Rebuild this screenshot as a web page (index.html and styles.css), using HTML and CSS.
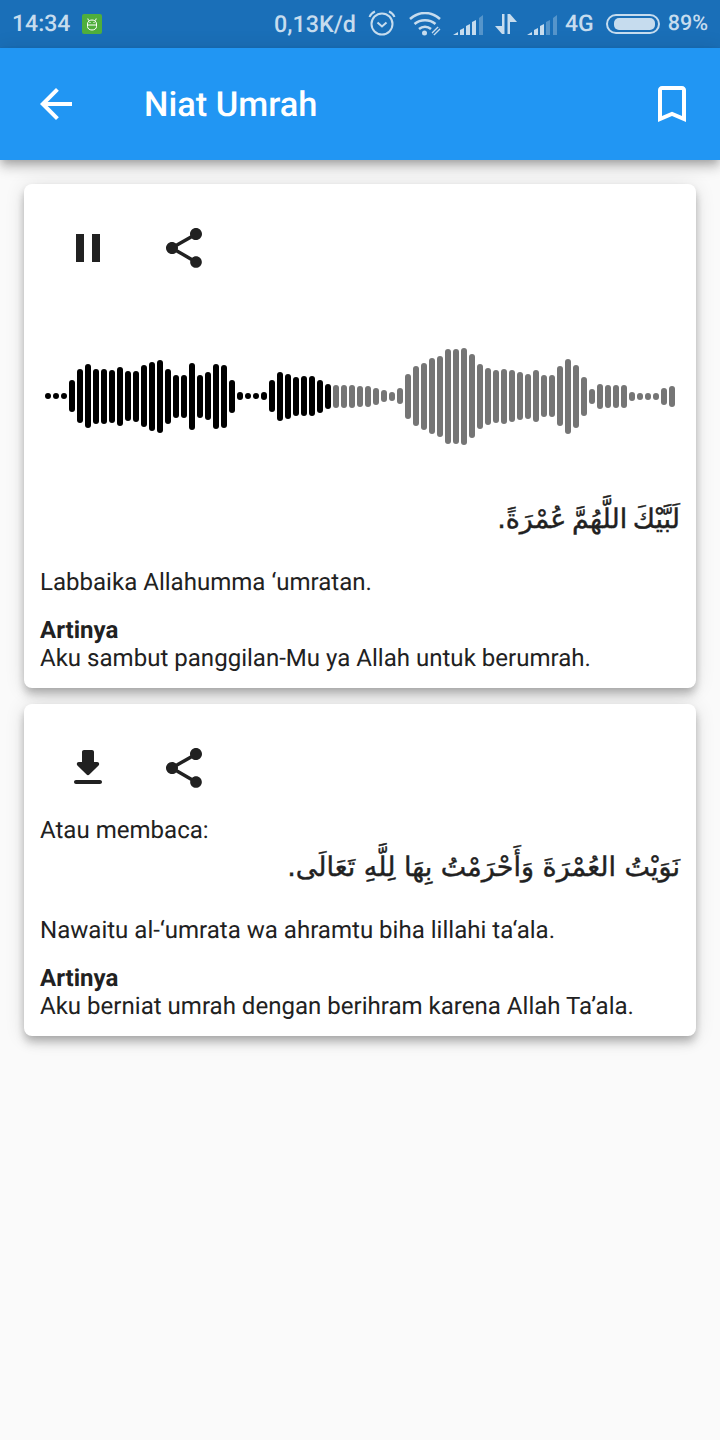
FILE: index.html
```html
<!DOCTYPE html>
<html lang="en">
<head>
    <meta charset="UTF-8">
    <meta name="viewport" content="width=device-width, initial-scale=1.0">
    <title>Niat Umrah</title>
    <link rel="stylesheet" href="styles.css">
</head>
<body>
    <div class="status-bar">
        <span class="status-time">14:34</span>
        <svg class="status-badge" width="20" height="20" viewBox="0 0 20 20">
            <rect width="20" height="20" rx="2" fill="#4fae3c"/>
            <path d="M6.500 6.500L5.800 4.500M13.500 6.500l.7-2M5.500 10c0-2.500 2-4 4.500-4s4.500 1.500 4.500 4v2.500c0 2.200-2 3.500-4.500 3.500s-4.500-1.300-4.500-3.500zM5.500 11h9" fill="none" stroke="#fff" stroke-width="1"/>
            <path d="M7.500 8h1v1h-1zM11.500 8h1v1h-1z" fill="#fff"/>
        </svg>
        <span class="status-speed">0,13K/d</span>
        <svg class="status-alarm" width="28" height="28" viewBox="0 0 28 28" fill="none" stroke="#c6dcee">
            <circle cx="14" cy="15" r="10.500" stroke-width="2"/>
            <path d="M9.500 13.500l4.500 4 4.500-4" stroke-width="2"/>
            <path d="M1.500 8c1-2.500 3-4.500 5.500-5.500M26.500 8c-1-2.500-3-4.500-5.500-5.500" stroke-width="2"/>
        </svg>
        <svg class="status-wifi" width="34" height="24" viewBox="0 0 34 24" fill="none" stroke="#c6dcee" stroke-width="2.500">
            <path d="M1 7c9-8 21-8 30 0M5.500 12c6-5 15-5 21 0M10 17c3.500-3 8.500-3 12 0"/>
            <circle cx="15.500" cy="21" r="2.500" fill="#c6dcee" stroke="none"/>
            <path d="M24 22l6-6" stroke-width="4"/>
            <path d="M24 22l6-6" stroke="#1a6fb8" stroke-width="1.500"/>
        </svg>
        <svg class="status-signal" width="30" height="20" viewBox="0 0 30 20" fill="#c6dcee">
            <path d="M0 20l5-3v3zM7 20v-5l4-2v7zM13 20v-9l4-2v11zM19 20V7l4-2v15z"/>
            <path d="M26 20V3l4-3v20z" opacity=".35"/>
        </svg>
        <svg class="status-arrows" width="22" height="20" viewBox="0 0 22 20" fill="#c6dcee">
            <path d="M7 0h2.500v20H7l-7-8h7zM12.500 0H15l7 8h-7v12h-2.500z"/>
        </svg>
        <svg class="status-signal second" width="30" height="20" viewBox="0 0 30 20" fill="#c6dcee">
            <path d="M0 20l5-3v3zM7 20v-5l4-2v7zM13 20v-9l4-2v11z"/>
            <path d="M19 20V7l4-2v15zM26 20V3l4-3v20z" opacity=".35"/>
        </svg>
        <span class="status-net">4G</span>
        <span class="battery"><span class="battery-fill"></span></span>
        <span class="status-percent">89%</span>
    </div>

    <header class="app-bar">
        <svg class="icon" width="48" height="48" viewBox="0 0 24 24">
            <path d="M20 11H7.830l5.590-5.590L12 4l-8 8 8 8 1.410-1.410L7.830 13H20v-2z"/>
        </svg>
        <h1 class="app-title">Niat Umrah</h1>
        <svg class="icon" width="48" height="48" viewBox="0 0 24 24">
            <path d="M17 3H7c-1.100 0-2 .9-2 2v16l7-3 7 3V5c0-1.100-.9-2-2-2zm0 15l-5-2.180L7 18V5h10v13z"/>
        </svg>
    </header>

    <main class="content">
        <section class="card">
            <div class="actions">
                <button class="icon-btn" type="button">
                    <svg class="icon" width="48" height="48" viewBox="0 0 24 24"><path d="M6 19h4V5H6v14zm8-14v14h4V5h-4z"/></svg>
                </button>
                <button class="icon-btn" type="button">
                    <svg class="icon" width="48" height="48" viewBox="0 0 24 24"><path d="M18 16.080c-.76 0-1.440.3-1.960.77L8.910 12.700c.05-.23.09-.46.09-.7s-.04-.47-.09-.7l7.050-4.110c.54.5 1.250.81 2.040.81 1.660 0 3-1.340 3-3s-1.340-3-3-3-3 1.340-3 3c0 .24.04.47.09.7L8.040 9.810C7.500 9.310 6.790 9 6 9c-1.660 0-3 1.340-3 3s1.340 3 3 3c.79 0 1.500-.31 2.040-.81l7.120 4.160c-.05.21-.08.43-.08.65 0 1.610 1.310 2.920 2.920 2.920 1.610 0 2.920-1.310 2.920-2.920s-1.310-2.920-2.920-2.920z"/></svg>
                </button>
            </div>
            <div class="wave">
                <i style="height:6px"></i><i style="height:6px"></i><i style="height:6px"></i><i style="height:32px"></i><i style="height:54px"></i><i style="height:64px"></i><i style="height:55px"></i><i style="height:55px"></i><i style="height:53px"></i><i style="height:59px"></i><i style="height:50px"></i><i style="height:51px"></i><i style="height:62px"></i><i style="height:69px"></i><i style="height:73px"></i><i style="height:55px"></i><i style="height:43px"></i><i style="height:43px"></i><i style="height:67px"></i><i style="height:43px"></i><i style="height:48px"></i><i style="height:65px"></i><i style="height:63px"></i><i style="height:33px"></i><i style="height:8px"></i><i style="height:6px"></i><i style="height:6px"></i><i style="height:8px"></i><i style="height:32px"></i><i style="height:49px"></i><i style="height:45px"></i><i style="height:39px"></i><i style="height:40px"></i><i style="height:40px"></i><i style="height:33px"></i><i style="height:25px"></i>
                <b style="height:23px"></b><b style="height:23px"></b><b style="height:23px"></b><b style="height:21px"></b><b style="height:21px"></b><b style="height:17px"></b><b style="height:12px"></b><b style="height:9px"></b><b style="height:16px"></b><b style="height:45px"></b><b style="height:60px"></b><b style="height:67px"></b><b style="height:76px"></b><b style="height:81px"></b><b style="height:95px"></b><b style="height:95px"></b><b style="height:97px"></b><b style="height:84px"></b><b style="height:65px"></b><b style="height:57px"></b><b style="height:53px"></b><b style="height:55px"></b><b style="height:52px"></b><b style="height:48px"></b><b style="height:45px"></b><b style="height:52px"></b><b style="height:42px"></b><b style="height:42px"></b><b style="height:60px"></b><b style="height:75px"></b><b style="height:63px"></b><b style="height:39px"></b><b style="height:15px"></b><b style="height:25px"></b><b style="height:23px"></b><b style="height:23px"></b><b style="height:23px"></b><b style="height:9px"></b><b style="height:7px"></b><b style="height:7px"></b><b style="height:7px"></b><b style="height:17px"></b><b style="height:21px"></b>
            </div>
            <p class="arabic short" dir="rtl" lang="ar">لَبَّيْكَ اللَّهُمَّ عُمْرَةً.</p>
            <p class="latin">Labbaika Allahumma ‘umratan.</p>
            <p class="meaning"><strong>Artinya</strong><br>Aku sambut panggilan-Mu ya Allah untuk berumrah.</p>
        </section>

        <section class="card">
            <div class="actions">
                <button class="icon-btn" type="button">
                    <svg class="icon" width="48" height="48" viewBox="0 0 24 24"><path d="M16.590 9H15V4c0-.55-.45-1-1-1h-4c-.55 0-1 .45-1 1v5H7.410c-.89 0-1.340 1.080-.71 1.710l4.590 4.590c.39.39 1.020.39 1.410 0l4.590-4.590c.63-.63.19-1.710-.7-1.710zM5 19c0 .55.45 1 1 1h12c.55 0 1-.45 1-1s-.45-1-1-1H6c-.55 0-1 .45-1 1z"/></svg>
                </button>
                <button class="icon-btn" type="button">
                    <svg class="icon" width="48" height="48" viewBox="0 0 24 24"><path d="M18 16.080c-.76 0-1.440.3-1.960.77L8.910 12.700c.05-.23.09-.46.09-.7s-.04-.47-.09-.7l7.050-4.110c.54.5 1.250.81 2.040.81 1.660 0 3-1.340 3-3s-1.340-3-3-3-3 1.340-3 3c0 .24.04.47.09.7L8.040 9.810C7.500 9.310 6.790 9 6 9c-1.660 0-3 1.340-3 3s1.340 3 3 3c.79 0 1.500-.31 2.040-.81l7.120 4.160c-.05.21-.08.43-.08.65 0 1.610 1.310 2.920 2.920 2.920 1.610 0 2.920-1.310 2.920-2.920s-1.310-2.920-2.920-2.920z"/></svg>
                </button>
            </div>
            <p class="plain">Atau membaca:</p>
            <p class="arabic" dir="rtl" lang="ar">نَوَيْتُ العُمْرَةَ وَأَحْرَمْتُ بِهَا لِلَّهِ تَعَالَى.</p>
            <p class="latin">Nawaitu al-‘umrata wa ahramtu biha lillahi ta‘ala.</p>
            <p class="meaning"><strong>Artinya</strong><br>Aku berniat umrah dengan berihram karena Allah Ta’ala.</p>
        </section>
    </main>
</body>
</html>
```

FILE: styles.css
```css
* {
    box-sizing: border-box;
}
body {
    margin: 0;
    min-height: 1440px;
    background-color: #fafafa;
    color: #212121;
    font-family: Roboto, "Liberation Sans", sans-serif;
    font-size: 24.05px;
    line-height: 28px;
    text-rendering: geometricPrecision;
}
p {
    margin: 0;
}
.icon {
    display: block;
    flex: none;
}

/* status bar */
.status-bar {
    display: flex;
    align-items: center;
    height: 48px;
    padding: 0 12px;
    background-color: #1a6fb8;
    color: #c6dcee;
    font-size: 23px;
    font-weight: 500;
}
.status-badge {
    margin-left: 12px;
}
.status-speed {
    margin-left: auto;
    font-size: 23.3px;
}
.status-alarm {
    margin-left: 12px;
    margin-bottom: 2px;
}
.status-wifi {
    margin-left: 13px;
}
.status-signal {
    margin-left: 10px;
    margin-top: 2px;
}
.status-arrows {
    margin-left: 12px;
}
.status-signal.second {
    margin-left: 10px;
}
.status-net {
    margin-left: 8px;
}
.battery {
    display: flex;
    width: 54px;
    height: 20px;
    margin-left: 12px;
    padding: 2px 3px 2px 6px;
    border: 2px solid #c6dcee;
    border-radius: 10px;
}
.battery-fill {
    width: 100%;
    background-color: #c6dcee;
    border-radius: 5px;
}
.status-percent {
    margin-left: 8px;
    font-size: 21.5px;
}

/* app bar */
.app-bar {
    display: flex;
    align-items: center;
    height: 112px;
    padding: 0 24px 0 32px;
    background-color: #2196f3;
    box-shadow: 0 4px 8px -2px rgba(0, 0, 0, 0.2), 0 8px 10px rgba(0, 0, 0, 0.14), 0 2px 20px rgba(0, 0, 0, 0.12);
    fill: #fff;
}
.app-title {
    flex: 1;
    margin: 2px 0 0 64px;
    color: #fff;
    font-size: 34.4px;
    font-weight: 500;
    line-height: 48px;
}

/* cards */
.content {
    display: flex;
    flex-direction: column;
    gap: 16px;
    padding: 24px;
}
.card {
    padding: 16px;
    background-color: #fff;
    border-radius: 8px;
    box-shadow: 0 4px 8px -2px rgba(0, 0, 0, 0.2), 0 8px 10px rgba(0, 0, 0, 0.14), 0 2px 20px rgba(0, 0, 0, 0.12);
}
.actions {
    display: flex;
    height: 96px;
}
.icon-btn {
    display: flex;
    align-items: center;
    justify-content: center;
    width: 96px;
    height: 96px;
    padding: 0;
    border: 0;
    background: none;
    fill: #212121;
}

/* waveform */
.wave {
    display: flex;
    align-items: center;
    gap: 2px;
    height: 200px;
    padding-left: 5px;
}
.wave i,
.wave b {
    display: block;
    flex: none;
    width: 6px;
    border-radius: 3px;
    background-color: #000;
}
.wave b {
    background-color: #757575;
}

.arabic {
    font-family: "DejaVu Sans", sans-serif;
    font-size: 27px;
    line-height: 48px;
    -webkit-text-stroke: 0.4px #212121;
}
.arabic.short {
    word-spacing: -3px;
}
.latin {
    margin-top: 24px;
}
.meaning {
    margin-top: 20px;
}
.meaning strong {
    font-weight: 700;
}
```
